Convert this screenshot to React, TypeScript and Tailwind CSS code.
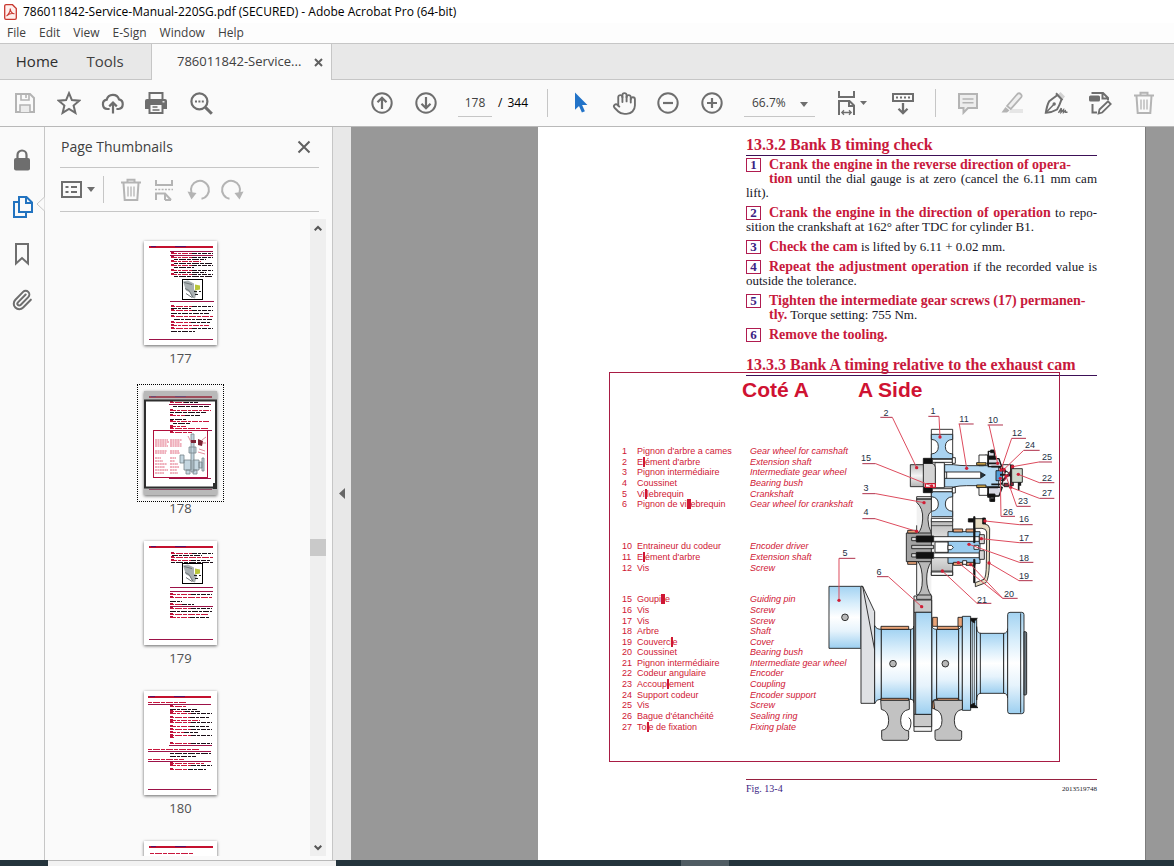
import React from "react";
import { Hand, Paperclip } from "lucide-react";

/* ---------- toolbar icons ---------- */

type IconProps = { children: React.ReactNode; className?: string; size?: number };

function Icon({ children, className = "text-[#6e6e6e]", size = 24 }: IconProps) {
  return (
    <svg
      width={size}
      height={size}
      viewBox="0 0 24 24"
      fill="none"
      stroke="currentColor"
      strokeWidth={2}
      className={className}
      aria-hidden="true"
    >
      {children}
    </svg>
  );
}

function ToolButton({ label, children }: { label: string; children: React.ReactNode }) {
  return (
    <button type="button" aria-label={label} className="flex h-11 w-11 shrink-0 items-center justify-center">
      {children}
    </button>
  );
}

const faded = "text-[#b4b4b4]";

const SaveIcon = () => (
  <Icon className={faded}>
    <path d="M3 3h14l4 4v14H3z" />
    <path d="M8 3v6h8V3" strokeWidth={1.6} />
    <path d="M13 4v3" strokeWidth={1.6} />
    <path d="M7 21v-7h10v7" fill="#ececec" strokeWidth={1.6} />
  </Icon>
);
const StarIcon = () => (
  <Icon>
    <path d="M12 2.2l2.9 6.9 7.3.6-5.6 4.9 1.8 7.3-6.4-4-6.4 4 1.8-7.3-5.6-4.9 7.3-.6z" />
  </Icon>
);
const CloudIcon = () => (
  <Icon>
    <path d="M8.6 18H6.4a4.7 4.7 0 0 1-.7-9.3A6.4 6.4 0 0 1 18 8.4 4.9 4.9 0 0 1 17.6 18h-2.2" strokeWidth={2.2} />
    <path d="M12 22.5V12M8.2 15.4L12 11.6l3.8 3.8" strokeWidth={2.2} />
  </Icon>
);
const PrintIcon = () => (
  <Icon>
    <path d="M4.500 9V2h13v7" />
    <path d="M2 8h18a2 2 0 0 1 2 2v8H0v-8a2 2 0 0 1 2-2z" fill="currentColor" stroke="none" />
    <path d="M4.500 13h13v9h-13z" fill="#fafafa" />
    <path d="M7.500 16h5M7.500 19h7" strokeWidth={1.3} />
    <path d="M17.500 10.8h2" stroke="#fafafa" strokeWidth={1.3} />
  </Icon>
);
const SearchIcon = () => (
  <Icon>
    <circle cx="10.4" cy="10.4" r="8" strokeWidth={2.2} />
    <path d="M16.4 16.4l6.4 6.4" strokeWidth={3} />
    <path d="M6 10.4h2M9.4 10.4h2M12.8 10.4h2" />
  </Icon>
);
const CircleIcon = ({ d }: { d: string }) => (
  <Icon>
    <circle cx="12" cy="12" r="9.7" strokeWidth={2} />
    <path d={d} strokeWidth={2.2} />
  </Icon>
);
const CursorIcon = () => (
  <Icon className="text-[#2273c8]">
    <path d="M7 1.5v17.3l4-3.8 2.9 6.6 3-1.3-2.8-6.4h5.3z" fill="currentColor" stroke="none" />
  </Icon>
);
const FitIcon = () => (
  <svg width="30" height="26" viewBox="0 0 30 26" fill="none" stroke="#6e6e6e" strokeWidth="2" aria-hidden="true">
    <path d="M2 1v6h15V1M2 25V11h10.5l4.5 4.500V25M12 11v5h5" />
    <path d="M5 22.500h9M7 20.300l-2.200 2.200L7 24.700M12 20.300l2.200 2.200-2.200 2.200" strokeWidth="1.300" />
    <path d="M23 11h7l-3.500 4z" fill="#6e6e6e" stroke="none" />
  </svg>
);
const KeyboardIcon = () => (
  <Icon>
    <path d="M2 3h20v7H2z" />
    <path d="M5 6.500h2M9 6.500h2M13 6.500h2M17 6.500h2" strokeWidth={1.8} />
    <path d="M12 12v10M7.500 17.800L12 22.200l4.500-4.400" strokeWidth={2.3} />
  </Icon>
);
const CommentIcon = () => (
  <Icon className={faded}>
    <path d="M3 3h18v14h-9l-4.500 4.700V17H3z" fill="#ededed" />
    <path d="M6.500 8h11M6.500 11.700h11" strokeWidth={1.4} />
  </Icon>
);
const HighlightIcon = () => (
  <Icon className={faded}>
    <path d="M11 18h12v4H9z" fill="#e6e6e6" stroke="none" />
    <path d="M7 15L17.500 2.800a2.600 2.600 0 0 1 3.700 3.500L10.700 18z" fill="#efefef" strokeWidth={1.800} />
    <path d="M5.500 16l4 3.500L7 21.500H1.500z" fill="currentColor" stroke="none" />
  </Icon>
);
const SignIcon = () => (
  <Icon>
    <path d="M14 3.500l2.500-2.500 4.500 4.500-2.500 3z" fill="#d2d2d2" stroke="none" />
    <path d="M12 2.300l6.500 7M13.200 4.200Q8 8 5.200 10.200Q3 14 1.800 21.800Q8 21.500 13 18.500Q15.500 14.500 17.300 9" />
    <path d="M2 21.600l7.500-7.800" strokeWidth={1.500} />
    <circle cx="10.200" cy="13" r="1.700" fill="currentColor" stroke="none" />
    <path d="M14.500 21.800l2.800-4.600-.3 4 2.500-2.500v2.600l1.800-1.500.4 1.500h1.800" strokeWidth={1.500} />
  </Icon>
);
const EditDocIcon = () => (
  <Icon>
    <path d="M4.500 3V2H15l5 5v2M14.500 2v5.500H20M4.500 13v8.500H9" />
    <rect x="1" y="4.500" width="11" height="6" rx="1.500" fill="currentColor" stroke="none" />
    <path d="M11.500 18.500l8.500-8.200 2.700 2.800-8.500 8.400-3.600 1z" strokeWidth={1.800} />
  </Icon>
);
const TrashIcon = () => (
  <Icon className={faded}>
    <path d="M2 4.500h20M8.500 4V1.800h7V4M4.500 5l1.200 17h12.600l1.200-17" />
    <path d="M9 8.500v10M12 8.500v10M15 8.500v10" strokeWidth={1.300} />
  </Icon>
);

const Caret = ({ className = "" }: { className?: string }) => (
  <svg width="8" height="5" viewBox="0 0 8 5" className={className} aria-hidden="true">
    <path d="M0 0h8L4 5z" fill="#6e6e6e" />
  </svg>
);

/* ---------- page thumbnails ---------- */

type Row = [y: number, x: number, w: number, kind: "r" | "k" | "m" | "bar" | "rule"];

const rows177: Row[] = [
  [6, 5, 64, "bar"], [10, 26, 43, "rule"], [12, 27, 42, "m"], [14, 26, 43, "rule"],
  [16, 27, 42, "m"], [18, 30, 32, "k"], [20, 27, 30, "r"], [22, 30, 39, "k"], [24, 27, 42, "m"], [26, 30, 20, "k"],
  [29, 27, 42, "m"], [31, 30, 32, "k"], [33, 27, 42, "m"], [35, 30, 38, "k"],
  [60, 26, 44, "rule"], [65, 27, 42, "m"], [67, 27, 20, "k"], [69, 27, 42, "m"], [72, 27, 38, "k"],
  [75, 27, 42, "r"], [78, 30, 38, "k"], [81, 27, 40, "m"], [84, 27, 38, "r"], [87, 27, 42, "m"], [90, 27, 24, "k"],
  [98, 5, 64, "rule"],
];
const rows178: Row[] = [
  [6, 5, 63, "bar"], [11, 26, 28, "m"], [13, 25, 42, "rule"], [15, 29, 36, "k"],
  [19, 26, 41, "r"], [21, 26, 36, "k"], [24, 26, 30, "m"], [28, 26, 16, "k"],
  [30, 26, 40, "r"], [32, 29, 18, "k"], [35, 26, 16, "r"], [37, 26, 38, "r"], [39, 25, 43, "rule"],
  [41, 26, 22, "r"], [87, 25, 42, "rule"], [98, 5, 63, "rule"],
];
const rows179: Row[] = [
  [6, 5, 64, "bar"], [12, 27, 42, "m"], [14, 28, 30, "k"], [16, 27, 42, "r"], [19, 27, 40, "m"], [21, 27, 42, "k"],
  [46, 26, 43, "rule"], [50, 26, 43, "rule"], [53, 26, 42, "m"], [56, 26, 42, "r"], [60, 26, 12, "k"],
  [63, 26, 24, "m"], [65, 26, 43, "rule"], [67, 26, 42, "m"], [70, 26, 42, "k"], [73, 26, 38, "r"], [76, 26, 40, "m"],
  [98, 5, 64, "rule"],
];
const rows180: Row[] = [
  [6, 4, 63, "bar"], [11, 4, 38, "r"], [13, 4, 63, "rule"], [15, 26, 16, "r"], [18, 26, 27, "k"], [20, 26, 30, "m"],
  [22, 26, 41, "m"], [26, 26, 40, "m"], [29, 26, 30, "r"], [31, 26, 41, "m"], [35, 26, 40, "m"], [38, 26, 41, "m"],
  [41, 26, 28, "m"], [44, 26, 41, "m"], [46, 26, 4, "r"], [52, 26, 41, "m"], [54, 25, 43, "rule"],
  [58, 4, 52, "r"], [60, 4, 63, "rule"], [62, 26, 41, "k"], [65, 26, 26, "k"], [68, 4, 36, "r"], [70, 4, 63, "rule"],
  [72, 26, 34, "r"], [74, 26, 41, "m"], [78, 26, 36, "m"], [98, 4, 63, "rule"],
];
const rows181: Row[] = [[6, 5, 64, "bar"], [12, 6, 44, "r"]];

function ThumbPage({ rows, photoY }: { rows: Row[]; photoY?: number }) {
  return (
    <svg width="73" height="104" viewBox="0 0 73 104" className="block bg-white" aria-hidden="true">
      <g shapeRendering="crispEdges">
        {rows.map(([y, x, w, kind], i) => {
          if (kind === "bar")
            return (
              <g key={i}>
                <rect x={x} y={y - 1} width={w} height="2" fill="#c4102f" />
                <rect x={x + 26} y={y - 1} width="11" height="1" fill="#5a1166" />
                <rect x={x + 2} y={y - 1} width="5" height="1" fill="#5a1166" />
              </g>
            );
          if (kind === "rule") return <rect key={i} x={x} y={y} width={w} height="1" fill="#9c1248" />;
          const half = kind === "m" ? Math.round(w / 2) : w;
          const mid = y + 0.5;
          return (
            <g key={i} strokeWidth="1">
              {x >= 25 && kind !== "k" && <path d={`M${x} ${y}h3`} stroke="#b8103c" strokeWidth="2" />}
              <path
                d={`M${x} ${mid}h${half}`}
                stroke={kind === "k" ? "#1c0f18" : "#c8163c"}
                strokeDasharray={i % 2 ? "4 1 7 1" : "6 1 3 1"}
              />
              {kind === "m" && <path d={`M${x + half} ${mid}h${half}`} stroke="#1c0f18" strokeDasharray="5 1 3 1" />}
            </g>
          );
        })}
      </g>
      {photoY !== undefined && (
        <g>
          <rect x="38.500" y={photoY} width="20" height="20" fill="#fff" stroke="#000" />
          <path d={`M39 ${photoY + 2}l5-1 6 3v6l3 2-2 7-3-1-2-5-4-2z`} fill="#a9b0b2" />
          <path d={`M41 ${photoY + 9}l4 2 4 7M40 ${photoY + 3}l8 2M42 ${photoY + 14}l6 4`} stroke="#6d7476" fill="none" />
          <path d={`M51 ${photoY + 5}l5 1v4l-5 1z`} fill="#b9c53a" />
          <path d={`M50 ${photoY + 12}h3M55 ${photoY + 12}h2M51 ${photoY + 15}h3`} stroke="#222" />
        </g>
      )}
    </svg>
  );
}

function MiniFigure() {
  return (
    <svg viewBox="0 0 73 104" className="absolute inset-0 h-full w-full" fill="none" aria-hidden="true">
      <rect width="73" height="9" fill="#808080" fillOpacity=".55" />
      <rect y="97" width="73" height="7" fill="#808080" fillOpacity=".55" />
      <path d="M11 49h13M11 51h14M11 53h12M11 55h13M11 60h12M11 62h11M11 67h6M11 70h8M11 73h12M11 76h10M11 79h13M11 82h9M26 49h12M26 51h10M26 53h12M26 55h12M26 60h9M26 62h10M26 67h6M26 70h5M26 73h8M26 76h9M26 79h7M26 82h8" stroke="#e0637a" strokeDasharray="2 .4" />
      <rect x="9.500" y="39.500" width="54" height="47" stroke="#b0103c" />
      <path d="M36 64h4v8h-4zM40 69h7v10h-7zM49 69h6v10h-6zM55 71h3v6h-3zM58 67h2v13h-2zM47 43h3v38h-3zM45 56h7v6h-7zM42 79h4v4h-4zM49 79h4v4h-4z" fill="#c4d6e0" stroke="#78858c" strokeWidth=".8" />
      <path d="M54 48l5 2-1 5-4-1zM47 49h5v3h-5z" fill="#7c2435" />
      <path d="M44 45l3 6M58 49l4-3M58 52h4M55 58l6 2M54 61l7 2" stroke="#d0455c" strokeWidth=".6" />
      <rect x="1" y="9.500" width="71" height="87" stroke="#2e2e2e" strokeWidth="2" />
      <path d="M69 92h6v6h-6z" fill="#2e2e2e" />
    </svg>
  );
}

type ThumbProps = { n: number; rows: Row[]; photoY?: number; current?: boolean; unlabelled?: boolean };

function Thumb({ n, rows, photoY, current, unlabelled }: ThumbProps) {
  return (
    <li className="h-[150px] shrink-0">
      <a href={`#page-${n}`} aria-label={`Page ${n}`} className="flex flex-col items-center text-[#505050]">
        <span className={current ? "border border-dotted border-black p-1.5" : "border border-transparent p-1.5"}>
          <span className="relative block shadow-[0_1px_3px_rgba(0,0,0,0.6)]">
            <ThumbPage rows={rows} photoY={photoY} />
            {current && <MiniFigure />}
          </span>
        </span>
        {!unlabelled && <span className="text-[13px] leading-[12px]">{n}</span>}
      </a>
    </li>
  );
}

/* ---------- manual text ---------- */

type Line = { bold?: string; text?: string; indent?: boolean; fill?: boolean };

const steps: Line[][] = [
  [
    { bold: "Crank the engine in the reverse direction of opera-" },
    { bold: "tion", text: " until the dial gauge is at zero (cancel the 6.11 mm cam", indent: true, fill: true },
    { text: "lift)." },
  ],
  [
    { bold: "Crank the engine in the direction of operation", text: " to repo-", fill: true },
    { text: "sition the crankshaft at 162° after TDC for cylinder B1." },
  ],
  [{ bold: "Check the cam", text: " is lifted by 6.11 + 0.02 mm." }],
  [
    { bold: "Repeat the adjustment operation", text: " if the recorded value is", fill: true },
    { text: "outside the tolerance." },
  ],
  [
    { bold: "Tighten the intermediate gear screws (17) permanen-" },
    { bold: "tly.", text: " Torque setting: 755 Nm.", indent: true },
  ],
  [{ bold: "Remove the tooling." }],
];

function StepLine({ line, number }: { line: Line; number?: number }) {
  const fill = line.fill ? "min-w-0 flex-1 whitespace-nowrap [text-align-last:justify]" : "whitespace-nowrap";
  return (
    <div className="flex h-[14px]">
      {number !== undefined && (
        <span className="mr-2 h-[14px] w-[15px] shrink-0 border border-[#b01c50] text-center text-[13px] leading-[12px] font-bold text-[#3b2383]">
          {number}
        </span>
      )}
      <span className={line.indent ? "ml-[23px] " + fill : fill}>
        {line.bold && <b className="text-[14px] text-[#c8193c]">{line.bold}</b>}
        {line.text}
      </span>
    </div>
  );
}

/* Letters between bars are printed as solid blocks. */
const parts: Record<number, [string, string]> = {
  1: ["Pignon d'arbre a cames", "Gear wheel for camshaft"],
  2: ["E|l|ément d'arbre", "Extension shaft"],
  3: ["Pignon intermédiaire", "Intermediate gear wheel"],
  4: ["Coussinet", "Bearing bush"],
  5: ["Vi|l|lebrequin", "Crankshaft"],
  6: ["Pignon de vi|ll|ebrequin", "Gear wheel for crankshaft"],
  10: ["Entraineur du codeur", "Encoder driver"],
  11: ["E|l|ément d'arbre", "Extension shaft"],
  12: ["Vis", "Screw"],
  15: ["Goupi|ll|e", "Guiding pin"],
  16: ["Vis", "Screw"],
  17: ["Vis", "Screw"],
  18: ["Arbre", "Shaft"],
  19: ["Couverc|l|e", "Cover"],
  20: ["Coussinet", "Bearing bush"],
  21: ["Pignon intermédiaire", "Intermediate gear wheel"],
  22: ["Codeur angulaire", "Encoder"],
  23: ["Accoup|l|ement", "Coupling"],
  24: ["Support codeur", "Encoder support"],
  25: ["Vis", "Screw"],
  26: ["Bague d'étanchéité", "Sealing ring"],
  27: ["To|l|e de fixation", "Fixing plate"],
};

function PartsTable() {
  return (
    <table className="ml-[12px] h-[286px] table-fixed border-collapse text-left font-['Liberation_Sans',Arial,sans-serif] text-[9px] leading-[10px] whitespace-nowrap text-[#cf1634]">
      <colgroup>
        <col className="w-[15px]" />
        <col className="w-[113px]" />
        <col className="w-[110px]" />
      </colgroup>
      <tbody>
        {Array.from({ length: 27 }, (_, i) => i + 1).map((n) => {
          const part = parts[n];
          if (!part)
            return (
              <tr key={n} className="h-[10px]">
                <td colSpan={3} className="p-0">
                  {"\u00a0"}
                </td>
              </tr>
            );
          return (
            <tr key={n} className="h-[10px]">
              <td className="p-0">{n}</td>
              <td className="p-0">
                {part[0].split("|").map((piece, i) =>
                  i % 2 ? (
                    <span key={i} className="bg-[#cf1634]">
                      {piece}
                    </span>
                  ) : (
                    piece
                  ),
                )}
              </td>
              <td className="p-0 italic">{part[1]}</td>
            </tr>
          );
        })}
      </tbody>
    </table>
  );
}

/* Callouts in drawing units (three per pixel): label centre, underline, leader targets. */
type Callout = { n: number; tx: number; ty: number; x1: number; x2: number; y: number; from: number; to: [number, number][] };

const callouts: Callout[] = [
  { n: 1, tx: 340, ty: 33, x1: 325, x2: 357, y: 49, from: 357, to: [[360, 111]] },
  { n: 2, tx: 197, ty: 38, x1: 181, x2: 217, y: 52, from: 217, to: [[290, 203]] },
  { n: 11, tx: 433, ty: 57, x1: 416, x2: 461, y: 72, from: 418, to: [[440, 205]] },
  { n: 10, tx: 520, ty: 60, x1: 503, x2: 549, y: 75, from: 507, to: [[533, 190]] },
  { n: 12, tx: 590, ty: 100, x1: 575, x2: 618, y: 115, from: 575, to: [[543, 210]] },
  { n: 24, tx: 630, ty: 135, x1: 611, x2: 659, y: 151, from: 611, to: [[552, 208]] },
  { n: 25, tx: 681, ty: 171, x1: 657, x2: 696, y: 186, from: 657, to: [[578, 200]] },
  { n: 22, tx: 681, ty: 234, x1: 658, x2: 703, y: 248, from: 658, to: [[595, 223]] },
  { n: 27, tx: 681, ty: 280, x1: 658, x2: 703, y: 295, from: 658, to: [[572, 262]] },
  { n: 23, tx: 609, ty: 303, x1: 590, x2: 632, y: 319, from: 590, to: [[558, 228]] },
  { n: 26, tx: 563, ty: 336, x1: 543, x2: 585, y: 349, from: 543, to: [[541, 235]] },
  { n: 16, tx: 612, ty: 358, x1: 598, x2: 638, y: 374, from: 598, to: [[495, 363]] },
  { n: 17, tx: 612, ty: 414, x1: 598, x2: 638, y: 428, from: 598, to: [[484, 416]] },
  { n: 18, tx: 612, ty: 474, x1: 598, x2: 640, y: 487, from: 598, to: [[447, 433]] },
  { n: 19, tx: 612, ty: 529, x1: 597, x2: 638, y: 542, from: 597, to: [[507, 489]] },
  { n: 20, tx: 567, ty: 581, x1: 548, x2: 593, y: 595, from: 548, to: [[415, 488], [452, 494]] },
  { n: 21, tx: 487, ty: 599, x1: 471, x2: 514, y: 610, from: 471, to: [[367, 513]] },
  { n: 6, tx: 178, ty: 516, x1: 171, x2: 205, y: 530, from: 205, to: [[305, 620]] },
  { n: 5, tx: 75, ty: 459, x1: 57, x2: 106, y: 475, from: 57, to: [[57, 601]] },
  { n: 4, tx: 139, ty: 336, x1: 127, x2: 165, y: 356, from: 165, to: [[290, 394]] },
  { n: 3, tx: 139, ty: 265, x1: 127, x2: 167, y: 281, from: 167, to: [[312, 308]] },
  { n: 15, tx: 138, ty: 175, x1: 127, x2: 167, y: 191, from: 167, to: [[335, 258]] },
];

function CrankDrawing() {
  return (
    <svg
      viewBox="609 372 451 390"
      className="absolute -top-px -left-px h-[390px] w-[451px]"
      role="img"
      aria-label="Section through crankshaft, intermediate gear and camshaft gear"
    >
      <defs>
        <linearGradient id="steel" x1="0" y1="0" x2="0" y2="1">
          <stop offset="0" stopColor="#a3d3f2" />
          <stop offset=".28" stopColor="#d9eefb" />
          <stop offset=".5" stopColor="#ffffff" />
          <stop offset=".72" stopColor="#e6f3fc" />
          <stop offset="1" stopColor="#9ccff0" />
        </linearGradient>
        <linearGradient id="grey" x1="0" y1="0" x2="0" y2="1">
          <stop offset="0" stopColor="#b9b9b9" />
          <stop offset=".5" stopColor="#f4f4f4" />
          <stop offset="1" stopColor="#b4b4b4" />
        </linearGradient>
      </defs>
      <g transform="translate(820 400) scale(.33333)" stroke="#1a1a1a" strokeWidth="2.600" strokeLinejoin="round">
        {/* crankshaft */}
        <path d="M27 559h100v186H27z" fill="url(#steel)" />
        <path d="M120 559h7v186h-7z" fill="#7f8d96" stroke="none" />
        <path d="M123 559h5l36 76v275h-41z" fill="#dfe1e4" />
        <path d="M128 559l36 191" fill="none" />
        <path d="M164 677c4 8 10 11 20 11v210c-10 0-16 3-20 13z" fill="url(#steel)" />
        <path d="M184 688h88v210h-88z" fill="url(#steel)" />
        <path d="M272 688c6 0 10-4 10-10v230c0-6-4-10-10-10z" fill="url(#steel)" />
        <path d="M183 679h83v9h-83zM183 895h83v6h-83z" fill="#e9a377" />
        <path d="M335 677c2 8 7 11 15 11v210c-8 0-13 3-15 11z" fill="url(#steel)" />
        <path d="M350 688h66v210h-66z" fill="url(#steel)" />
        <path d="M416 688l11-10v230l-11-10z" fill="url(#steel)" />
        <path d="M352 679h63v9h-63zM352 895h63v6h-63z" fill="#e9a377" />
        <path d="M338 652h14v27h-14zM414 652h14v27h-14zM338 904h14v22h-14zM414 904h14v22h-14z" fill="#e9a377" />
        <path d="M427 649h25v282h-25z" fill="url(#steel)" />
        <path d="M452 658h18v264h-18z" fill="url(#steel)" />
        <path d="M457 660v260M463 660v260" strokeWidth="2" />
        <path d="M452 655h20l-8 8v6l-10-6zM452 915l12-6v6l10 8h-22z" fill="#111" />
        <path d="M470 680c0 12 4 20 13 20v180c-9 0-13 8-13 20z" fill="url(#steel)" />
        <path d="M481 700h70v180h-70z" fill="url(#steel)" />
        <path d="M551 700c8 0 12-6 12-14v208c0-8-4-14-12-14z" fill="url(#steel)" />
        <rect x="563" y="637" width="49" height="304" rx="7" fill="url(#steel)" />
        <path d="M602 640v298" />
        <path d="M612 695h4q4 0 4 5v180q0 5-4 5h-4z" fill="#6c7880" />
        <g fill="#b8b8b8">
          <circle cx="75" cy="652" r="10" />
          <circle cx="219" cy="791" r="10" />
          <circle cx="376" cy="791" r="10" />
        </g>
        {/* crank gear */}
        <path d="M282 588h53v406h-53z" fill="#f1f1f1" />
        <path d="M282 600h53v37h-53zM282 943h53v37h-53z" fill="#c9c9c9" />
        <path d="M287 637h48v306h-48z" fill="url(#steel)" />
        <path d="M282 637v306" />
        {/* counterweight webs */}
        <path d="M182 901h86v27q-26 4-26 33t24 32v20q0 8-5 8h-71q-5 0-5-8v-22q21-2 21-30t-22-33z" fill="#c2c2c2" />
        <path d="M266 953q7 2 7 16t-7 22" fill="none" />
        <path d="M341 901h86v27q-24 4-24 33t22 32v20q0 8-5 8h-70q-5 0-5-8v-22q21-2 21-30t-22-33z" fill="#c2c2c2" />
        {/* camshaft gear */}
        <path d="M334 88h64v274h-64z" fill="#fff" />
        <path d="M334 103h64v15q-22 2-22 22t22 22v14h-64v-14q21-2 21-22t-21-22z" fill="#a9d3f1" />
        <path d="M334 275h64v15q-22 2-22 22t22 22v16h-64v-16q21-2 21-22t-21-22z" fill="#a9d3f1" />
        <path d="M345 188h28v75h-28z" fill="#fff" />
        <rect x="271" y="194" width="41" height="66" fill="url(#grey)" />
        <path d="M310 190h26q10 2 10 12v48q0 10-10 12h-26z" fill="#d4d4d4" />
        <path d="M310 175h27v15h-27zM310 263h27v15h-27z" fill="#111" />
        <path d="M337 178h60v9h-60zM337 266h60v9h-60z" fill="#fff" />
        <path d="M397 173h9v17h-9zM397 262h9v17h-9z" fill="#fff" />
        <path d="M316 251h30v11h-30z" fill="#fff" stroke="#c81a2e" strokeWidth="4" />
        {/* extension shaft */}
        <path d="M374 194h26q20 3 40 3h50l8-4h38v68h-38l-8-4h-50q-20 0-40 4h-26z" fill="#b5daf4" />
        <path d="M374 216h108v19H374z" fill="#fff" />
        <path d="M380 216v19M484 218l12 7-12 8z" fill="#1f3442" />
        {/* encoder */}
        <path d="M470 190h26v-24h10v22h30l8 8M470 263h26v18h14v6h24v-20l10-10" fill="none" strokeWidth="4" />
        <path d="M477 165h26v32h-26zM477 262h26v24h-26z" fill="#fff" />
        <path d="M505 154h18v22h14l8 24h-40zM505 262h42l-10 26h-14v15h-13v-15h-5z" fill="#d7d9e4" strokeWidth="4" />
        <path d="M505 168h22v10h-22zM503 282h22v10h-22zM512 150h12v8h-12zM512 296h12v8h-12z" fill="#111" />
        <path d="M500 190h34M500 262h34M514 200h24l9 12h26M514 253h28l8-7h24" fill="none" strokeWidth="5" />
        <path d="M470 188h28v7h-28zM470 255h28v7h-28z" fill="#e0b24c" />
        <path d="M528 212h20v30h-20z" fill="#4f9bd6" />
        <path d="M548 194h24v62h-24z" fill="#f5f5f5" />
        <path d="M546 204l28 26M546 244l28-30M540 224h34" strokeWidth="6" />
        <path d="M550 212l16 18M552 242l18-26" stroke="#9a2545" strokeWidth="4" />
        <circle cx="560" cy="220" r="5" fill="#fff" />
        <path d="M552 250h14v10h-14zM572 195h8v62h-8z" fill="#8c2a3a" />
        <rect x="575" y="206" width="32" height="41" fill="#cdd8cb" />
        <path d="M596 247v24M601 247v10" strokeWidth="5" />
        {/* intermediate gear */}
        <path d="M290 290h44v308h-44z" fill="#f1f1f1" stroke="none" />
        <path d="M290 297h44v38q-10 4-10 24t10 40v86q-14 20-14 52t14 50v11h-44v-10q17-10 17-48t-13-55v-86q12-10 14-42t-18-50z" fill="#b9b9b9" />
        <path d="M290 290h44v7h-44zM290 376v22M290 485v100M290 585h44" fill="none" />
        <path d="M259 399h76v86h-76z" fill="#a3a3a3" />
        <path d="M263 391h27v8h-27zM263 485h27v8h-27z" fill="#e9a377" />
        <path d="M334 362h64v164h-64z" fill="url(#grey)" />
        <path d="M334 355h64v10h-64zM334 516h64v10h-64z" fill="#fff" />
        <path d="M334 377h64M334 513h64" strokeWidth="2" />
        <path d="M384 395h96v95h-96z" fill="#9bcdf0" />
        <path d="M400 387h28v9h-28zM438 387h27v9h-27zM400 487h28v9h-28zM438 487h27v9h-27z" fill="#e9a377" />
        <path d="M345 426h39v31h-39z" fill="#fff" />
        <path d="M384 436h10l6 6-6 7h-10zM462 436h14v12h-14z" fill="#fff" />
        <path d="M428 482h12v11h-12z" fill="#fff" />
        <path d="M275 436h66v10h-66z" fill="#c9c9c9" />
        <path d="M275 412h14v10h-14zM275 461h14v10h-14z" fill="#ddd" />
        <path d="M289 408h52v18h-52zM289 457h52v18h-52z" fill="#111" />
        <path d="M341 410h137v14H341zM341 459h137v14H341z" fill="#fff" />
        <path d="M478 404h15v27h-15zM478 452h15v26h-15z" fill="#d6d6d6" />
        {/* cover */}
        <path d="M462 356h33v16q13 2 14 14l-1 105q-1 44-10 57l-32 12v-12l26-10q7-8 7-47l1-95q-1-10-14-11h-24z" fill="#e6dcc2" />
        <path d="M445 356h18v10h-18zM461 350h4v78h-4zM461 478h4v70h-4zM488 354h8v18h-8z" fill="#111" />
      </g>
      <g transform="translate(820 400) scale(.33333)" fill="none" stroke="#dd4a5c" strokeWidth="3">
        {callouts.map((c) => (
          <g key={c.n}>
            <path d={`M${c.x1} ${c.y}H${c.x2}`} stroke="#b0304a" />
            {c.to.map(([x, y], i) => (
              <g key={i}>
                <path d={`M${c.from} ${c.y}L${x} ${y}`} />
                <circle cx={x} cy={y} r="5" fill="#d01f36" stroke="none" />
              </g>
            ))}
          </g>
        ))}
      </g>
      <g className="font-['Liberation_Sans',Arial,sans-serif] text-[9px]" fill="#1d3045" textAnchor="middle">
        {callouts.map((c) => (
          <text key={c.n} x={Math.round(820 + c.tx / 3)} y={Math.round(403 + c.ty / 3)}>
            {c.n}
          </text>
        ))}
      </g>
    </svg>
  );
}

function ManualPage() {
  const heading = "text-[16px] leading-[16px] pb-[2px] font-bold whitespace-nowrap text-[#c8193c] border-b border-[#3c1057]";
  return (
    <article className="w-[608px] shrink-0 border-r border-[#7d7d7d] bg-white pt-[10px] pr-[48px] font-['Liberation_Serif','Times_New_Roman',serif]">
      <section className="ml-[208px] text-[13px] leading-[14px] text-[#161626]">
        <h2 className={heading}>13.3.2 Bank B timing check</h2>
        <ol className="flex flex-col gap-[6px] pt-[2px]">
          {steps.map((lines, i) => (
            <li key={i}>
              {lines.map((line, j) => (
                <StepLine key={j} line={line} number={j === 0 ? i + 1 : undefined} />
              ))}
            </li>
          ))}
        </ol>
        <h2 className={"mt-[15px] " + heading}>13.3.3 Bank A timing relative to the exhaust cam</h2>
      </section>
      <figure className="relative -mt-[4px] ml-[71px] h-[390px] w-[451px] border border-[#a81c44]">
        <div className="flex h-[73px] gap-[49px] pt-[4px] pl-[132px] font-['Liberation_Sans',Arial,sans-serif] text-[21px] leading-[26px] font-bold text-[#cf1232]">
          <span>Coté A</span>
          <span>A Side</span>
        </div>
        <PartsTable />
        <CrankDrawing />
      </figure>
      <div className="mt-[17px] ml-[208px] flex items-center justify-between border-t border-[#96203f] text-[10px] leading-[18px]">
        <span className="text-[#3b2383]">Fig. 13-4</span>
        <span className="text-[7px] text-[#161626]">2013519748</span>
      </div>
    </article>
  );
}

/* ---------- application frame ---------- */

export default function App() {
  return (
    <div className="flex h-screen flex-col overflow-hidden bg-[#fafafa] font-['Open_Sans','Segoe_UI',sans-serif] text-[#404040]">
      <header>
        <div className="flex h-[23px] items-center gap-[6px] bg-white pl-[4px] text-xs text-black">
          <svg width="13" height="16" viewBox="0 0 13 16" fill="none" stroke="#c8382f" aria-hidden="true">
            <path d="M2 .7h6.500l3.800 3.800V14a1.300 1.300 0 0 1-1.300 1.300H2A1.300 1.300 0 0 1 .7 14V2A1.300 1.300 0 0 1 2 .7z" fill="#fff0ee" strokeWidth="1.300" />
            <path d="M2.500 12c1.500-.8 4-4.500 3.800-7.500M6.300 4.500c-.5 2.500 2 5.300 4.200 5.300M3 11.500c2-1.800 5-2.300 7.500-1.700" strokeWidth="1.100" />
          </svg>
          <h1 className="whitespace-nowrap">786011842-Service-Manual-220SG.pdf (SECURED) - Adobe Acrobat Pro (64-bit)</h1>
        </div>
        <nav aria-label="Menu" className="flex h-[20px] items-center gap-[13px] bg-[#fdfdfd] pl-[7px] text-xs">
          {["File", "Edit", "View", "E-Sign", "Window", "Help"].map((item) => (
            <button key={item} type="button">
              {item}
            </button>
          ))}
        </nav>
        <div className="flex h-[37px] border-y border-[#c6c6c6] bg-[#e8e8e8]">
          <button type="button" className="w-[74px] text-[15px] text-[#2e2e2e]">
            Home
          </button>
          <button type="button" className="w-[62px] text-[15px]">
            Tools
          </button>
          <div className="-mb-px ml-[15px] flex w-[181px] items-center justify-between border-x border-[#c6c6c6] bg-[#fafafa] pr-[8px] pl-[25px] text-[13px]">
            <span>786011842-Service...</span>
            <button type="button" aria-label="Close tab">
              <svg width="9" height="9" viewBox="0 0 9 9" stroke="#606060" strokeWidth="2" aria-hidden="true">
                <path d="M1 1l7 7M8 1L1 8" />
              </svg>
            </button>
          </div>
        </div>
        <div role="toolbar" aria-label="Tools" className="flex h-[47px] items-center border-b border-[#b9b9b9] pl-[3px] text-xs">
          <ToolButton label="Save"><SaveIcon /></ToolButton>
          <ToolButton label="Add to starred"><StarIcon /></ToolButton>
          <ToolButton label="Upload"><CloudIcon /></ToolButton>
          <ToolButton label="Print"><PrintIcon /></ToolButton>
          <ToolButton label="Find text"><SearchIcon /></ToolButton>
          <div className="ml-[137px] flex">
            <ToolButton label="Previous page"><CircleIcon d="M12 18V7M7.500 11.300L12 6.800l4.500 4.500" /></ToolButton>
            <ToolButton label="Next page"><CircleIcon d="M12 6v11M7.500 12.700l4.500 4.500 4.500-4.500" /></ToolButton>
          </div>
          <input
            aria-label="Page number"
            defaultValue="178"
            className="ml-[10px] h-[27px] w-[34px] shrink-0 border-b border-[#c6c6c6] bg-transparent text-center outline-none"
          />
          <span className="ml-[6px] flex w-[30px] shrink-0 justify-between text-black">
            <span>/</span>
            <span>344</span>
          </span>
          <span className="ml-[19px] h-[28px] w-px bg-[#c6c6c6]" />
          <div className="ml-[10px] flex">
            <ToolButton label="Select"><CursorIcon /></ToolButton>
            <ToolButton label="Pan"><Hand className="text-[#6e6e6e]" size={25} strokeWidth={1.8} /></ToolButton>
            <ToolButton label="Zoom out"><CircleIcon d="M7 12h10" /></ToolButton>
            <ToolButton label="Zoom in"><CircleIcon d="M7 12h10M12 7v10" /></ToolButton>
          </div>
          <div className="relative ml-[10px]">
            <select aria-label="Zoom level" className="h-[27px] w-[71px] appearance-none border-b border-[#c6c6c6] bg-transparent pl-[8px]">
              <option>66.7%</option>
            </select>
            <Caret className="pointer-events-none absolute top-[12px] right-[7px]" />
          </div>
          <div className="ml-[15px] flex gap-[7px]">
            <ToolButton label="Fit width"><FitIcon /></ToolButton>
            <ToolButton label="Show toolbar"><KeyboardIcon /></ToolButton>
          </div>
          <span className="ml-[10px] h-[28px] w-px bg-[#c6c6c6]" />
          <div className="ml-[10px] flex">
            <ToolButton label="Comment"><CommentIcon /></ToolButton>
            <ToolButton label="Highlight"><HighlightIcon /></ToolButton>
            <ToolButton label="Sign"><SignIcon /></ToolButton>
            <ToolButton label="Edit fields"><EditDocIcon /></ToolButton>
            <ToolButton label="Delete"><TrashIcon /></ToolButton>
          </div>
        </div>
      </header>

      <main className="flex min-h-0 flex-1">
        <nav aria-label="Panels" className="relative flex w-[45px] shrink-0 flex-col items-center border-r border-[#c6c6c6] pt-[10px] text-[#6e6e6e]">
          <button type="button" aria-label="Security" className="flex h-[46px] items-center">
            <Icon>
              <path d="M7.500 11V7a4.500 4.500 0 0 1 9 0v4" strokeWidth={2.200} />
              <rect x="4" y="10" width="16" height="12.500" rx="2" fill="currentColor" stroke="none" />
            </Icon>
          </button>
          <button type="button" aria-label="Page thumbnails" className="flex h-[47px] items-center">
            <Icon className="text-[#2273c0]">
              <path d="M9 2h7.500l5.500 5.500V17H9zM16 2v6h6M9 7H4v15h12v-5" />
            </Icon>
          </button>
          <button type="button" aria-label="Bookmarks" className="flex h-[47px] items-center">
            <Icon>
              <path d="M6 2h12v19.500l-6-5.500-6 5.500z" />
            </Icon>
          </button>
          <button type="button" aria-label="Attachments" className="flex h-[45px] items-center">
            <Paperclip size={22} strokeWidth={2.200} />
          </button>
          <svg width="9" height="14" viewBox="0 0 9 14" className="absolute top-[70px] -right-px" fill="#fafafa" stroke="#c6c6c6" aria-hidden="true">
            <path d="M8.500 0L1 7l7.500 7" />
          </svg>
        </nav>

        <aside aria-label="Page Thumbnails" className="flex w-[288px] shrink-0 flex-col border-r border-[#c6c6c6]">
          <div className="mr-[13px] ml-[15px] flex h-[41px] items-center justify-between border-b border-[#c6c6c6] pr-[8px] pl-px text-sm">
            <h2>Page Thumbnails</h2>
            <button type="button" aria-label="Close panel">
              <svg width="14" height="14" viewBox="0 0 14 14" stroke="#606060" strokeWidth="2" aria-hidden="true">
                <path d="M1.500 1.500l11 11M12.500 1.500l-11 11" />
              </svg>
            </button>
          </div>
          <div className="mr-[13px] ml-[15px] flex h-[44px] shrink-0 items-center border-b border-[#c6c6c6] pl-px">
            <button type="button" aria-label="Options" className="flex items-center gap-[5px]">
              <svg width="21" height="17" viewBox="0 0 21 17" fill="none" stroke="#6e6e6e" strokeWidth="2" aria-hidden="true">
                <path d="M1 1h19v15H1z" />
                <path d="M4.500 6h3M4.500 11h3M10 6h6M10 11h6" />
              </svg>
              <Caret />
            </button>
            <span className="ml-[8px] h-[27px] w-px bg-[#c6c6c6]" />
            <button type="button" aria-label="Delete pages" className="ml-[15px]"><TrashIcon /></button>
            <button type="button" aria-label="Split pages" className="ml-[9px]">
              <Icon className={faded}>
                <path d="M4 2v5h16V2M4 22v-6.500h9l6 6.500M13 15.500V22M19 22h-6" />
                <path d="M3 11.500h18" strokeDasharray="2 1.300" strokeWidth={1.500} />
              </Icon>
            </button>
            <button type="button" aria-label="Rotate left" className="ml-[11px]">
              <Icon className={faded}>
                <path d="M14.500 20.700A9 9 0 1 0 4.500 15" />
                <path d="M.500 13.500l9 1.500-5 6.500z" fill="currentColor" stroke="none" />
              </Icon>
            </button>
            <button type="button" aria-label="Rotate right" className="ml-[9px]">
              <Icon className={faded}>
                <path d="M9.500 20.700A9 9 0 1 1 19.500 15" />
                <path d="M23.500 13.500l-9 1.500 5 6.500z" fill="currentColor" stroke="none" />
              </Icon>
            </button>
          </div>
          <div className="mt-[7px] mr-[6px] mb-[4px] flex min-h-0 flex-1">
            <ul className="flex min-w-0 flex-1 flex-col overflow-hidden pt-[15px] pl-[6px]">
              <Thumb n={177} rows={rows177} photoY={38.5} />
              <Thumb n={178} rows={rows178} current />
              <Thumb n={179} rows={rows179} photoY={22.5} />
              <Thumb n={180} rows={rows180} />
              <Thumb n={181} rows={rows181} unlabelled />
            </ul>
            <div className="flex w-[16px] flex-col items-center bg-[#efefef] pt-[6px] pb-[5px]">
              <svg width="8" height="6" viewBox="0 0 8 6" fill="none" stroke="#555" strokeWidth="2" aria-hidden="true">
                <path d="M.700 5.300L4 2l3.300 3.300" />
              </svg>
              <span className="mt-[308px] h-[17px] w-full bg-[#c9c9c9]" />
              <svg width="8" height="6" viewBox="0 0 8 6" fill="none" stroke="#555" strokeWidth="2" className="mt-auto" aria-hidden="true">
                <path d="M.700 .700L4 4l3.300-3.300" />
              </svg>
            </div>
          </div>
        </aside>

        <button type="button" aria-label="Collapse panel" className="flex w-[18px] shrink-0 items-center justify-center bg-[#e8e8e8]">
          <svg width="6" height="11" viewBox="0 0 6 11" aria-hidden="true">
            <path d="M6 0v11L0 5.500z" fill="#666" />
          </svg>
        </button>

        <div className="flex min-w-0 flex-1 justify-end overflow-hidden bg-[#989898] pr-[28px]">
          <ManualPage />
        </div>
      </main>

      <footer className="flex h-[6px] shrink-0 bg-[#24343c]">
        <span className="ml-[48px] w-[288px] border-t border-[#b9b9b9] bg-[#f2f2f2]" />
        <span className="ml-[345px] w-[48px] bg-[#4f5c63]" />
      </footer>
    </div>
  );
}
